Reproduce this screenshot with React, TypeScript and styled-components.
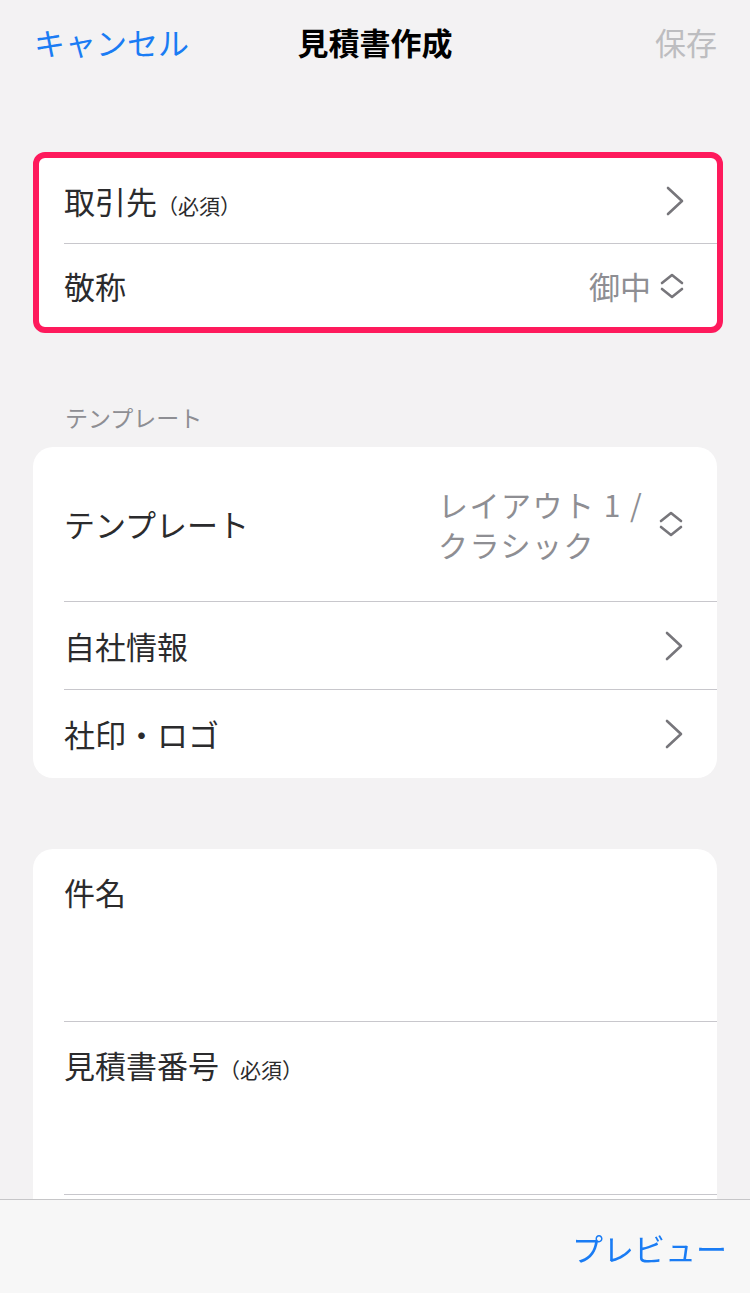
import React from "react";
import styled, { createGlobalStyle } from "styled-components";

const GlobalStyle = createGlobalStyle`
  html, body {
    margin: 0;
    padding: 0;
    overflow: hidden;
    background: #f3f2f3;
    font-family: "Noto Sans CJK JP", "Noto Sans", sans-serif;
  }
`;

const Chevron = () => (
  <svg width="20" height="30" viewBox="0 0 20 30" fill="none">
    <path d="M3 2 L17 15 L3 28" stroke="#77767b" strokeWidth="2.6" strokeLinecap="round" strokeLinejoin="round" />
  </svg>
);

const UpDown = () => (
  <svg width="26" height="28" viewBox="0 0 26 28" fill="none">
    <path d="M3 11 L13 3 L23 11" stroke="#77767b" strokeWidth="2.6" strokeLinecap="round" strokeLinejoin="round" />
    <path d="M3 17 L13 25 L23 17" stroke="#77767b" strokeWidth="2.6" strokeLinecap="round" strokeLinejoin="round" />
  </svg>
);

const App = () => {
  return (
    <Page>
      <GlobalStyle />
      <NavBar>
        <NavButton>キャンセル</NavButton>
        <NavTitle>見積書作成</NavTitle>
        <NavButton $disabled>保存</NavButton>
      </NavBar>

      <Content>
        <HighlightCard>
          <Row $height={86}>
            <Label>
              取引先<Small>（必須）</Small>
            </Label>
            <Accessory>
              <Chevron />
            </Accessory>
          </Row>
          <Row $height={83} $last>
            <Label>敬称</Label>
            <Accessory>
              <Value>御中</Value>
              <UpDown />
            </Accessory>
          </Row>
        </HighlightCard>

        <Section>
          <SectionLabel>テンプレート</SectionLabel>
          <Card>
            <Row $height={155}>
              <Label>テンプレート</Label>
              <Accessory>
                <MultiValue>
                  レイアウト 1 /<br />
                  クラシック
                </MultiValue>
                <UpDown />
              </Accessory>
            </Row>
            <Row $height={88}>
              <Label>自社情報</Label>
              <Accessory>
                <Chevron />
              </Accessory>
            </Row>
            <Row $height={88} $last>
              <Label>社印・ロゴ</Label>
              <Accessory>
                <Chevron />
              </Accessory>
            </Row>
          </Card>
        </Section>

        <FieldCard>
          <FieldRow>
            <Label>件名</Label>
          </FieldRow>
          <FieldRow>
            <Label>
              見積書番号<Small>（必須）</Small>
            </Label>
          </FieldRow>
          <FieldRow />
        </FieldCard>
      </Content>

      <BottomBar>
        <BarButton>プレビュー</BarButton>
      </BottomBar>
    </Page>
  );
};

const Page = styled.div`
  width: 750px;
  height: 1293px;
  overflow: hidden;
  background: #f3f2f3;
`;

const NavBar = styled.div`
  height: 88px;
  padding: 0 33px 0 34px;
  display: flex;
  align-items: center;
  justify-content: space-between;
  position: relative;
  margin-top: -3px;
`;

const NavButton = styled.div<{ $disabled?: boolean }>`
  font-size: 31px;
  color: ${(p) => (p.$disabled ? "#bdbdc0" : "#1a7cf4")};
`;

const NavTitle = styled.div`
  position: absolute;
  left: 0;
  right: 0;
  text-align: center;
  font-size: 31px;
  font-weight: 700;
  color: #000;
  pointer-events: none;
`;

const Content = styled.div`
  padding: 67px 0 0 33px;
  display: flex;
  flex-direction: column;
`;

const Card = styled.div`
  width: 684px;
  background: #fff;
  border-radius: 20px;
  overflow: hidden;
`;

const HighlightCard = styled(Card)`
  width: 678px;
  border: 6px solid #fe1a5c;
  border-radius: 12px;
`;

const Row = styled.div<{ $height: number; $last?: boolean }>`
  height: ${(p) => p.$height}px;
  box-sizing: border-box;
  margin-left: 31px;
  padding-right: 33px;
  display: flex;
  align-items: center;
  justify-content: space-between;
  border-bottom: ${(p) => (p.$last ? "none" : "1px solid #c8c7cc")};

  ${HighlightCard} > & {
    margin-left: 25px;
    padding-right: 32px;
  }
`;

const Label = styled.span`
  font-size: 31px;
  color: #2b2b2d;
  line-height: 1.2;
  display: flex;
  align-items: baseline;
`;

const Small = styled.span`
  font-size: 21px;
  color: #2b2b2d;
`;

const Accessory = styled.div`
  display: flex;
  align-items: center;
  gap: 8px;
`;

const Value = styled.span`
  font-size: 31px;
  color: #8e8e93;
`;

const MultiValue = styled.span`
  font-size: 30px;
  line-height: 40px;
  color: #8e8e93;
  width: 212px;
  letter-spacing: 1.5px;
`;

const Section = styled.div`
  margin-top: 68px;
  display: flex;
  flex-direction: column;
`;

const SectionLabel = styled.div`
  font-size: 23px;
  color: #8e8e93;
  padding-left: 32px;
  height: 46px;
  line-height: 32px;
`;

const FieldCard = styled(Card)`
  margin-top: 71px;
  border-radius: 20px 20px 0 0;
`;

const FieldRow = styled.div`
  height: 173px;
  box-sizing: border-box;
  margin-left: 31px;
  padding-top: 24px;
  border-bottom: 1px solid #c8c7cc;
`;

const BottomBar = styled.div`
  position: fixed;
  left: 0;
  right: 0;
  bottom: 0;
  height: 93px;
  border-top: 1px solid #c6c6c8;
  background: rgba(247, 247, 247, 0.97);
  display: flex;
  justify-content: flex-end;
  align-items: center;
  padding-right: 23px;
`;

const BarButton = styled.div`
  font-size: 31px;
  color: #1a7cf4;
  margin-top: 2px;
`;

export default App;
